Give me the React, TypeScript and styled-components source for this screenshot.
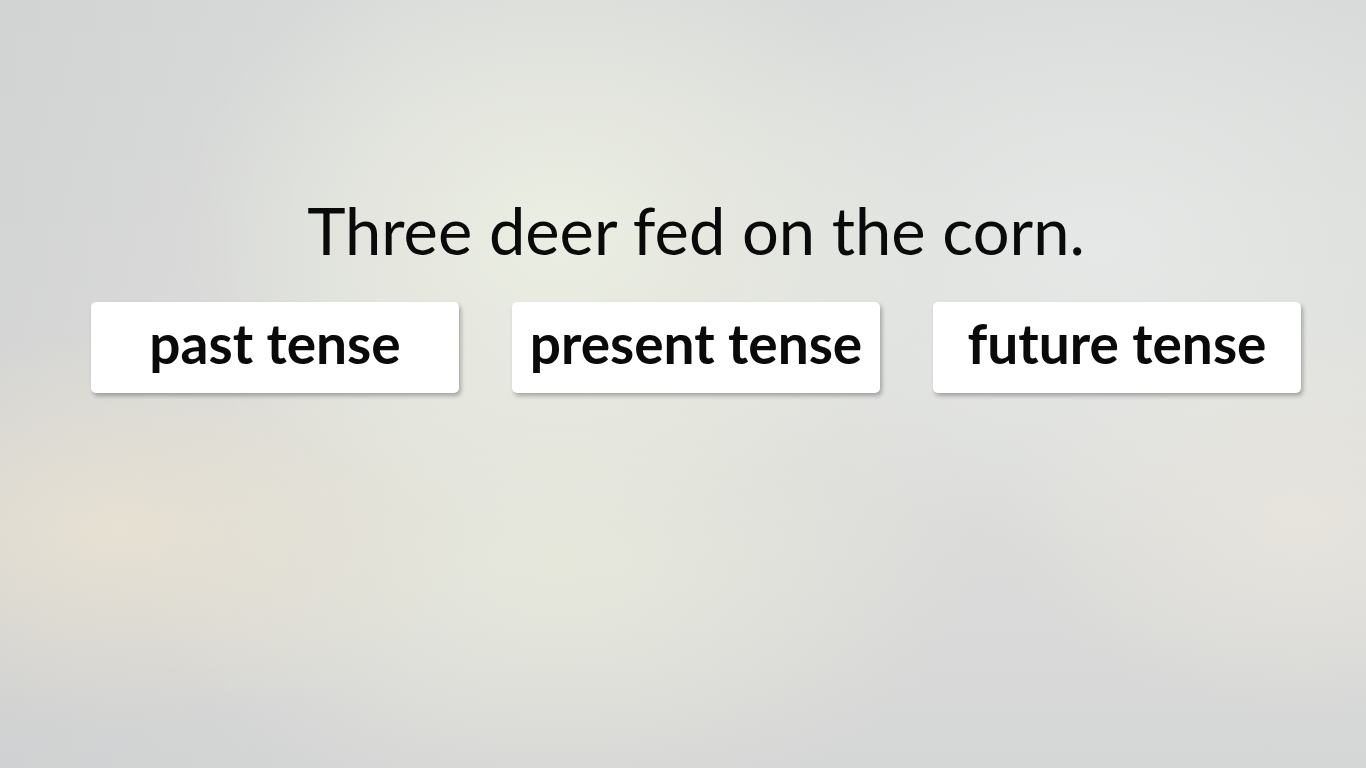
import React from "react";
import styled, { createGlobalStyle } from "styled-components";

const Global = createGlobalStyle`
  html, body { margin: 0; padding: 0; height: 100%; }
  body { font-family: Lato, "Noto Sans", sans-serif; }
  #root { height: 100%; }
`;

const Page = styled.div`
  height: 100vh;
  box-sizing: border-box;
  padding-top: 190px;
  padding-left: 26px;
  display: flex;
  flex-direction: column;
  align-items: center;
  background:
    radial-gradient(ellipse 380px 300px at 560px 230px, rgba(236, 239, 226, 0.95), rgba(236, 239, 226, 0) 100%),
    radial-gradient(ellipse 360px 200px at 120px 530px, rgba(233, 226, 210, 0.9), rgba(233, 226, 210, 0) 100%),
    radial-gradient(ellipse 420px 260px at 560px 560px, rgba(232, 233, 220, 0.9), rgba(232, 233, 220, 0) 100%),
    radial-gradient(ellipse 300px 200px at 1300px 520px, rgba(234, 230, 222, 0.8), rgba(234, 230, 222, 0) 100%),
    radial-gradient(ellipse 420px 300px at 1100px 250px, rgba(230, 233, 231, 0.9), rgba(230, 233, 231, 0) 100%),
    linear-gradient(90deg, rgba(205, 206, 207, 0.6) 0%, rgba(205, 206, 207, 0) 30%),
    linear-gradient(180deg, #d9dbda 0%, #dfe0dd 50%, #d5d6d6 100%);
`;

const Title = styled.h1`
  margin: 0;
  font-family: Lato, "Noto Sans", sans-serif;
  font-weight: 400;
  font-size: 65px;
  line-height: 80px;
  color: #0a0a0a;
`;

const Choices = styled.div`
  margin-top: 32px;
  display: flex;
  gap: 53px;
`;

const Choice = styled.button`
  width: 368px;
  height: 91px;
  border: none;
  border-radius: 5px;
  background: #ffffff;
  box-shadow: 2px 3px 4px rgba(0, 0, 0, 0.28);
  font-family: Lato, "Noto Sans", sans-serif;
  font-weight: 700;
  font-size: 55px;
  line-height: 1;
  color: #0a0a0a;
  padding: 0 0 8px;
  white-space: nowrap;
  cursor: pointer;
`;

export default function App() {
  return (
    <>
      <Global />
      <Page>
        <Title>Three deer fed on the corn.</Title>
        <Choices>
          <Choice>past tense</Choice>
          <Choice>present tense</Choice>
          <Choice>future tense</Choice>
        </Choices>
      </Page>
    </>
  );
}
